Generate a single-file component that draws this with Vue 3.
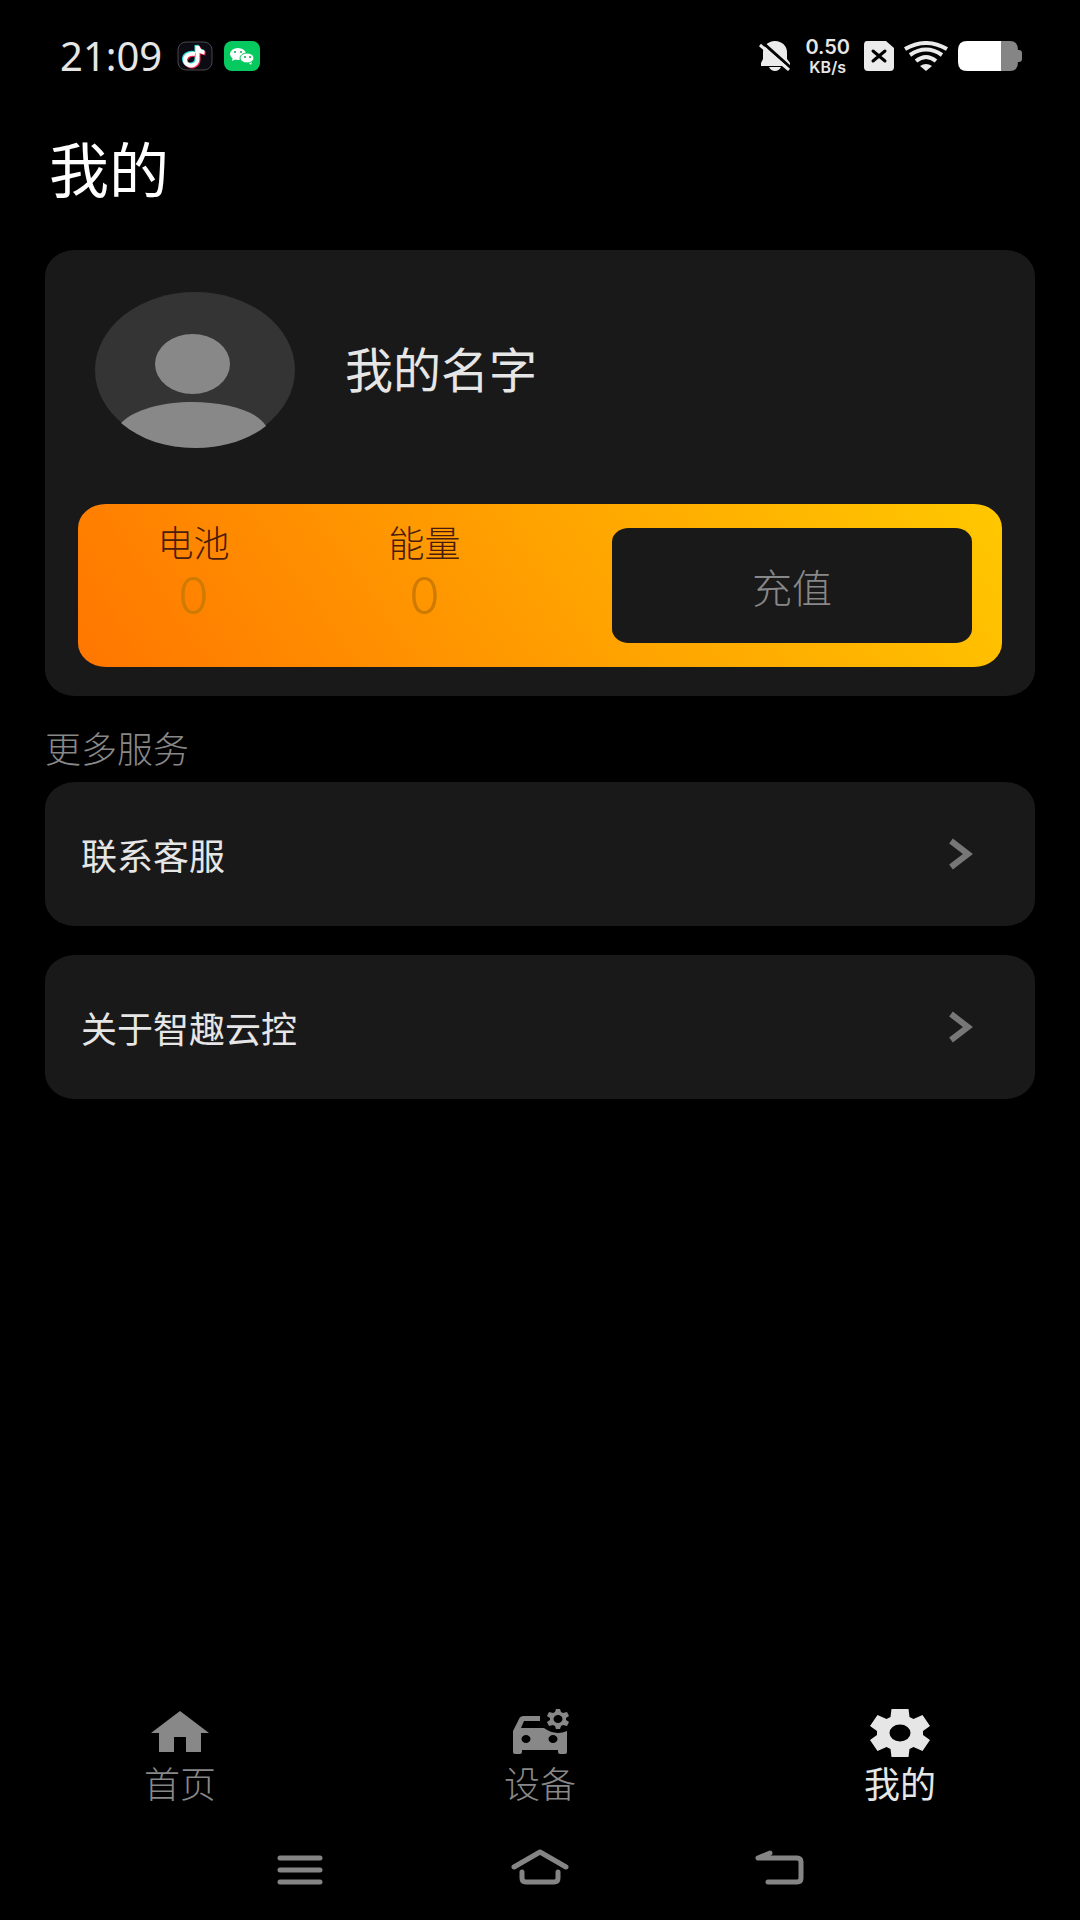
<script setup>
import { ref } from 'vue'

const stats = [
	{ label: '电池', value: 0 },
	{ label: '能量', value: 0 },
]

const services = ['联系客服', '关于智趣云控']

const tabs = [
	{ key: 'home', label: '首页' },
	{ key: 'device', label: '设备' },
	{ key: 'mine', label: '我的' },
]
const activeTab = ref('mine')
</script>

<template>
	<div class="page">
		<header class="status-bar">
			<div class="status-left">
				<span class="clock">21:09</span>
				<svg class="app-icon" viewBox="0 0 36 30">
					<rect x="1" y="1" width="34" height="28" rx="8" fill="#0c0a12" stroke="#4a474c" />
					<g fill="none" stroke-width="4">
						<path d="M18 13C12 12 8 15 8 19s4 6 7 5.500 5.500-3 5.500-6V5c.5 4 3 6 7 6.500" stroke="#35d8dc" transform="translate(-1 -1)" />
						<path d="M18 13C12 12 8 15 8 19s4 6 7 5.500 5.500-3 5.500-6V5c.5 4 3 6 7 6.500" stroke="#ee2c55" transform="translate(1 1)" />
						<path d="M18 13C12 12 8 15 8 19s4 6 7 5.500 5.500-3 5.500-6V5c.5 4 3 6 7 6.500" stroke="#fff" />
					</g>
				</svg>
				<svg class="app-icon" viewBox="0 0 36 30">
					<rect width="36" height="30" rx="8" fill="#06c95f" />
					<path d="M8 20l1-4h6l-3 2zM27 24l1-4h-6l3 2z" fill="#fff" />
					<ellipse cx="14" cy="13" rx="8" ry="6" fill="#fff" />
					<ellipse cx="23" cy="17" rx="7" ry="5" fill="#fff" stroke="#06c95f" />
					<g fill="#06a950">
						<circle cx="11" cy="11" r="1" />
						<circle cx="17" cy="11" r="1" />
						<circle cx="21" cy="16" r="1" />
						<circle cx="26" cy="16" r="1" />
					</g>
				</svg>
			</div>
			<div class="status-right">
				<svg class="bell" viewBox="0 0 32 30">
					<path d="M2 25V22l2-4v-7C4 5 9 0 16 0s12 5 12 11v7l3 4v3zM10 26h12q-2 4-6 4t-6-4z" fill="#ebebeb" />
					<path d="M3 1l29 26" stroke="#000" stroke-width="3" />
					<path d="M1 4l29 25" stroke="#ebebeb" stroke-width="3" />
				</svg>
				<div class="speed">
					<span>0.50</span>
					<small>KB/s</small>
				</div>
				<svg class="sim" viewBox="0 0 30 30">
					<path d="M3 0h19l8 7v19q0 4-4 4H4q-4 0-4-4V4q0-4 3-4z" fill="#ebebeb" />
					<path d="M9 10l12 10M21 10L9 20" stroke="#000" stroke-width="3" stroke-linecap="round" />
				</svg>
				<svg class="wifi" viewBox="0 0 44 30">
					<g fill="none" stroke="#ebebeb" stroke-width="4">
						<path d="M1 8Q22-4 43 8" />
						<path d="M6 14q16-11 32 0" />
						<path d="M12 20q10-8 20 0" />
					</g>
					<path d="M16 25q6-4 12 0l-6 5z" fill="#ebebeb" />
				</svg>
				<svg class="battery" viewBox="0 0 64 30">
					<path d="M43 0h9q8 0 8 9h1q3 0 3 3v6q0 3-3 3h-1q0 9-8 9h-9z" fill="#858585" />
					<path d="M9 0h34v30H9q-9 0-9-9V9q0-9 9-9z" fill="#fff" />
				</svg>
			</div>
		</header>

		<main class="content">
			<h1>我的</h1>

			<section class="card profile-card">
				<div class="profile">
					<svg class="avatar" viewBox="0 0 200 156">
						<ellipse cx="100" cy="78" rx="100" ry="78" fill="#343434" />
						<ellipse cx="97.500" cy="72" rx="37.500" ry="30" fill="#888" />
						<path d="M26 131C40 117 68 110 98 110s64 8 73 24C153 148 128 156 100 156S46 148 26 131z" fill="#888" />
					</svg>
					<span class="name">我的名字</span>
				</div>
				<div class="wallet">
					<div v-for="stat in stats" :key="stat.label" class="stat">
						<span class="stat-label">{{ stat.label }}</span>
						<span class="stat-value">{{ stat.value }}</span>
					</div>
					<div class="wallet-action">
						<button type="button" class="recharge">充值</button>
					</div>
				</div>
			</section>

			<h2>更多服务</h2>
			<nav class="services">
				<a v-for="service in services" :key="service" href="#" class="card service" @click.prevent>
					<span>{{ service }}</span>
					<svg class="chevron" viewBox="0 0 24 32">
						<path d="M2 3l17 13L2 29" fill="none" stroke="#777" stroke-width="6" />
					</svg>
				</a>
			</nav>
		</main>

		<nav class="tab-bar">
			<button
				v-for="tab in tabs"
				:key="tab.key"
				type="button"
				:class="['tab', { 'tab--active': activeTab === tab.key }]"
				@click="activeTab = tab.key"
			>
				<svg class="nav-icon" viewBox="0 0 60 48" fill="currentColor">
					<path v-if="tab.key === 'home'" d="M30 2l29 22h-8v19H36V28H24v15H9V24H1z" />
					<g v-else-if="tab.key === 'device'" fill-rule="evenodd">
						<path d="M3 22L9 10Q10 7 14 7H30V12H14L11 19H34Q45 27 57 22V43Q57 45 55 45H50Q48 45 48 43V41H12V43Q12 45 10 45H5Q3 45 3 43zM11.500 30a4.500 4 0 1 0 9 0a4.500 4 0 1 0-9 0zM38.500 30a4.500 4 0 1 0 9 0a4.500 4 0 1 0-9 0z" />
						<path d="M46 0h4l1 3 2 1 4-1 2 4-3 2v2l3 2-2 4-4-1-2 1-1 3h-4l-1-3-2-1-4 1-2-4 3-2V9l-3-2 2-4 4 1 2-1zM43.500 10a4.500 4 0 1 0 9 0a4.500 4 0 1 0-9 0z" />
					</g>
					<path v-else fill-rule="evenodd" d="M21.500 0h17l1 8 4 2 9-4L60 17l-7 5v4l7 5-7.500 11-9-4-4 2-1 8h-17l-1-8-4-2-9 4L0 31l7-5v-4l-7-5L7.500 6l9 4 4-2zM19.500 24a10.500 8.500 0 1 0 21 0a10.500 8.500 0 1 0-21 0z" />
				</svg>
				<span>{{ tab.label }}</span>
			</button>
		</nav>

		<footer class="system-nav">
			<button type="button" aria-label="菜单">
				<svg class="nav-icon" viewBox="0 0 60 48">
					<path d="M10 13h40M10 25h40M10 37h40" />
				</svg>
			</button>
			<button type="button" aria-label="主屏幕">
				<svg class="nav-icon" viewBox="0 0 60 48">
					<path d="M4 22L30 7l26 15M12 27v6q0 4 4 4h28q4 0 4-4v-6" />
				</svg>
			</button>
			<button type="button" aria-label="返回">
				<svg class="nav-icon" viewBox="0 0 60 48">
					<path d="M20 8L8 13h39q4 0 4 4v16q0 4-4 4H18" />
				</svg>
			</button>
		</footer>
	</div>
</template>

<style>
body {
	background: #000;
}
</style>

<style scoped>
.page {
	display: flex;
	flex-direction: column;
	min-height: 100vh;
	box-sizing: border-box;
	padding-bottom: 27px;
	background: #000;
	color: #e6e6e6;
	font-family: "Noto Sans", "Noto Sans CJK SC", sans-serif;
}

svg {
	display: block;
	flex: none;
}

button {
	padding: 0;
	border: none;
	background: none;
	font-family: inherit;
	cursor: pointer;
}

.status-bar {
	display: flex;
	justify-content: space-between;
	align-items: center;
	height: 40px;
	padding: 36px 58px 0 60px;
}

.status-left,
.status-right {
	display: flex;
	align-items: center;
}

.status-left {
	gap: 11px;
}

.status-right {
	gap: 10px;
}

.clock {
	margin-right: 4px;
	font-size: 40px;
	line-height: 40px;
}

.app-icon {
	width: 36px;
	height: 30px;
}

.bell {
	width: 32px;
	height: 30px;
}

.speed {
	display: flex;
	flex-direction: column;
	align-items: center;
	margin: 0 4px;
	font-family: Inter, sans-serif;
	font-size: 20px;
	font-weight: 600;
	line-height: 22px;
}

.speed small {
	font-size: 16px;
	line-height: 18px;
}

.sim {
	width: 30px;
	height: 30px;
}

.wifi {
	width: 44px;
	height: 30px;
}

.battery {
	width: 64px;
	height: 30px;
}

.content {
	padding: 52px 45px 0;
}

h1 {
	margin: 0 0 38px;
	padding-left: 4px;
	font-size: 60px;
	font-weight: 400;
	line-height: 84px;
	color: #fff;
}

h2 {
	margin: 34px 0 12px;
	font-size: 36px;
	font-weight: 300;
	line-height: 40px;
	color: #888;
}

.card {
	border-radius: 30px / 26px;
	background: #191919;
}

.profile-card {
	padding: 42px 33px 29px;
}

.profile {
	display: flex;
	align-items: center;
	gap: 50px;
	margin-bottom: 56px;
	padding-left: 17px;
}

.avatar {
	width: 200px;
	height: 156px;
}

.name {
	font-size: 48px;
	line-height: 56px;
}

.wallet {
	display: grid;
	grid-template-columns: 1fr 1fr 2fr;
	border-radius: 28px / 24px;
	background: linear-gradient(55deg, #ff7600, #ffa000 50%, #ffc800);
}

.stat {
	display: flex;
	flex-direction: column;
	align-items: center;
	padding-top: 20px;
}

.stat-label {
	font-size: 36px;
	font-weight: 300;
	line-height: 40px;
	color: #4a1c10;
}

.stat-value {
	font-family: Inter, sans-serif;
	font-size: 50px;
	font-weight: 300;
	line-height: 64px;
	color: #cf7a00;
}

.wallet-action {
	display: flex;
	padding: 24px 30px 24px 72px;
}

.recharge {
	flex: 1;
	height: 115px;
	border-radius: 17px / 14px;
	background: #191919;
	font-size: 40px;
	font-weight: 300;
	color: #888;
}

.services {
	display: flex;
	flex-direction: column;
	gap: 29px;
}

.service {
	display: flex;
	justify-content: space-between;
	align-items: center;
	height: 144px;
	padding: 0 62px 0 36px;
	font-size: 36px;
	color: #e6e6e6;
	text-decoration: none;
}

.chevron {
	width: 24px;
	height: 32px;
}

.tab-bar {
	display: flex;
	margin-top: auto;
}

.tab {
	display: flex;
	flex: 1;
	flex-direction: column;
	align-items: center;
	gap: 8px;
	font-size: 36px;
	font-weight: 300;
	line-height: 40px;
	color: #888;
}

.tab--active {
	font-weight: 400;
	color: #e6e6e6;
}

.nav-icon {
	width: 60px;
	height: 48px;
}

.system-nav {
	display: flex;
	margin-top: 40px;
	padding: 0 calc(100% / 6);
}

.system-nav button {
	display: flex;
	flex: 1;
	justify-content: center;
}

.system-nav path {
	fill: none;
	stroke: #858585;
	stroke-width: 5;
	stroke-linecap: round;
	stroke-linejoin: round;
}
</style>
